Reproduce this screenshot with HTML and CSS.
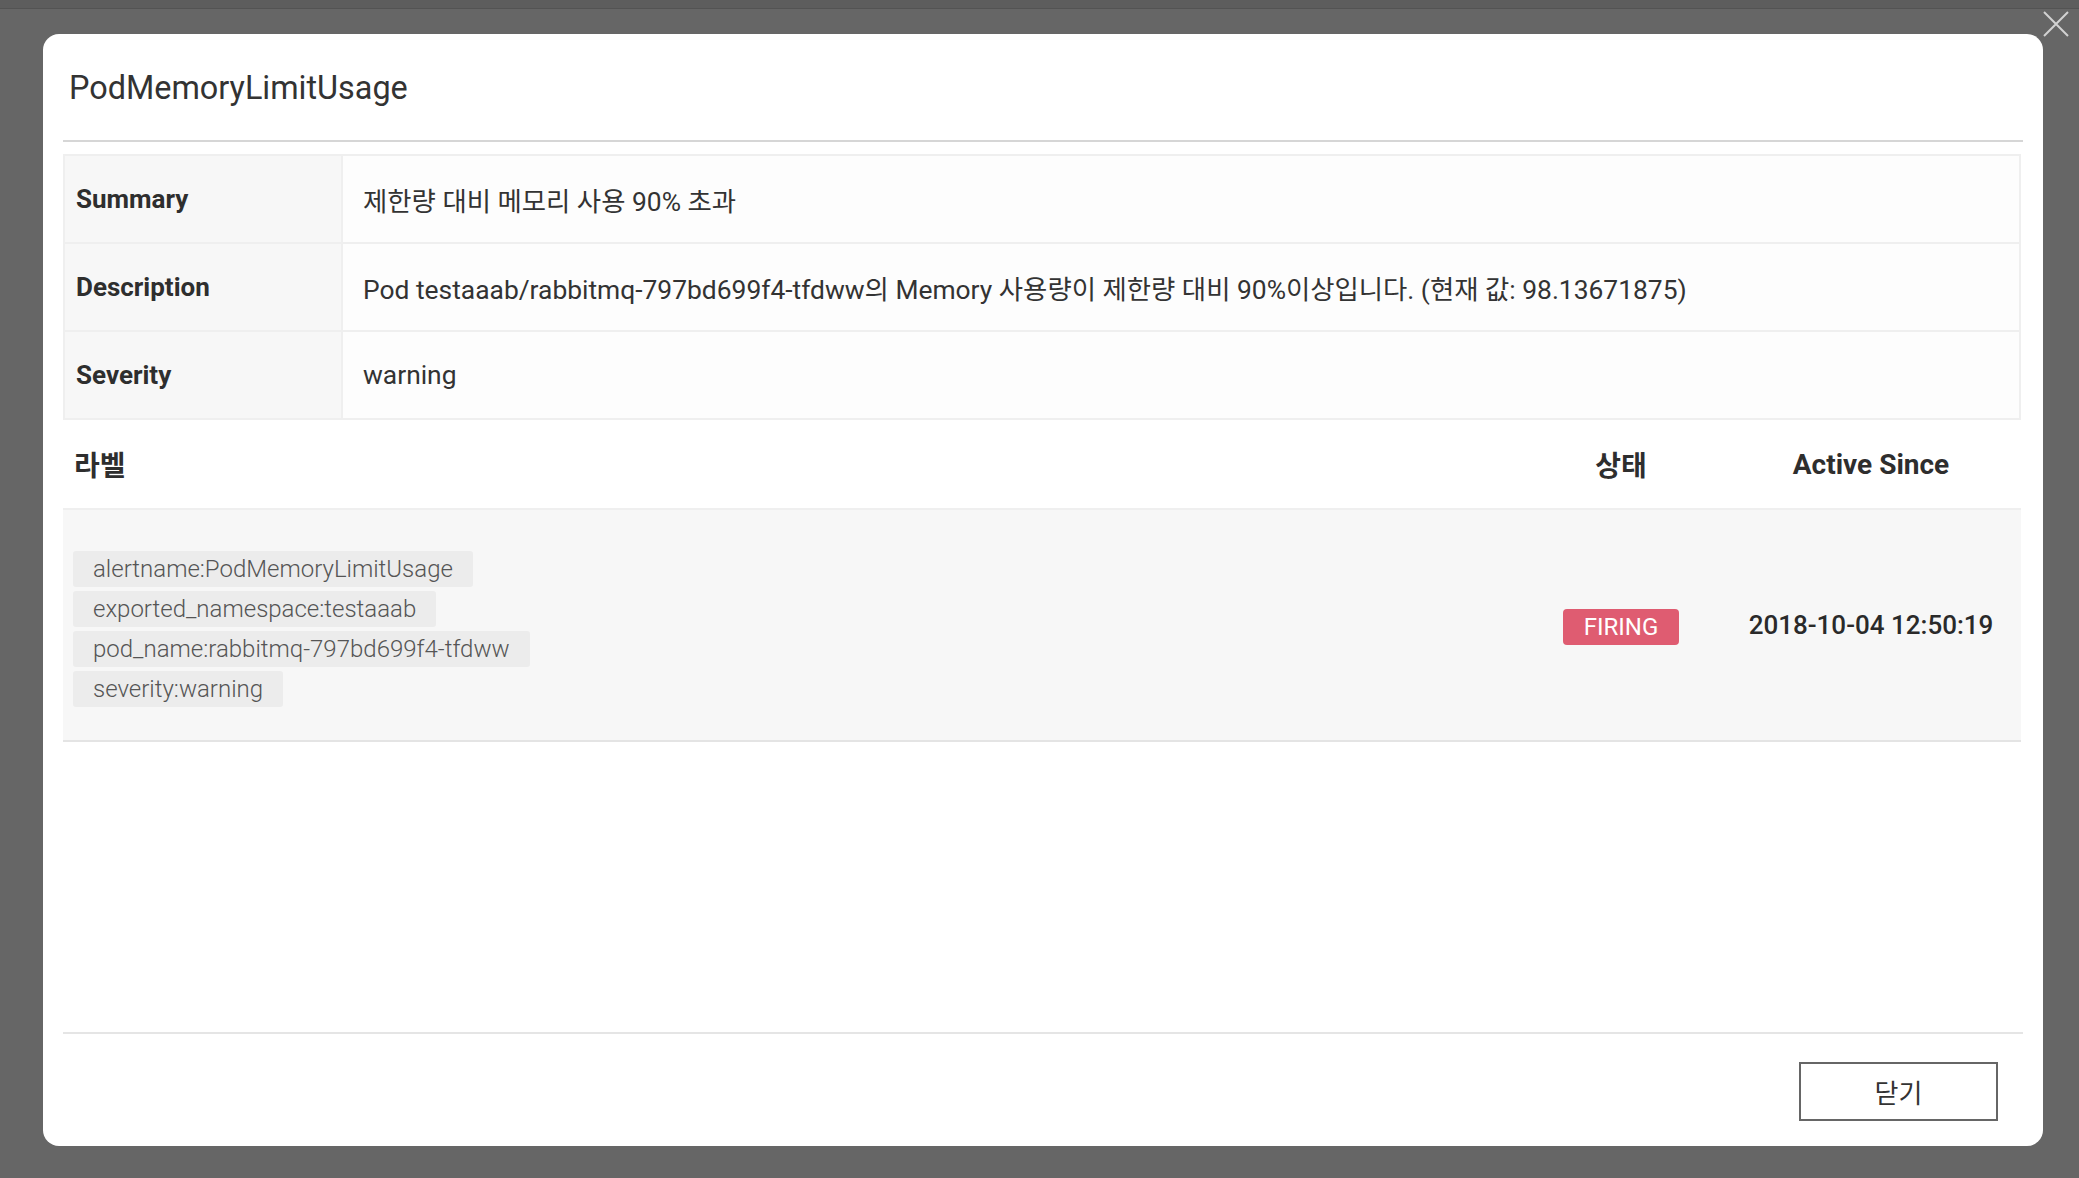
FILE: index.html
```html
<!DOCTYPE html>
<html lang="ko">
<head>
<meta charset="utf-8">
<title>PodMemoryLimitUsage</title>
<link rel="stylesheet" href="styles.css">
</head>
<body>
<div class="topbar"></div>
<button class="close-x" aria-label="close">
  <svg width="26" height="26" viewBox="0 0 26 26"><path d="M1 1 L25 25 M25 1 L1 25" stroke="#d2d2d2" stroke-width="2" fill="none"/></svg>
</button>
<div class="modal">
  <div class="modal-header">
    <h2 class="modal-title">PodMemoryLimitUsage</h2>
  </div>
  <div class="modal-body">
    <div class="info">
      <div class="info-label">Summary</div>
      <div class="info-value">제한량 대비 메모리 사용 90% 초과</div>
      <div class="info-label">Description</div>
      <div class="info-value">Pod testaaab/rabbitmq-797bd699f4-tfdww의 Memory 사용량이 제한량 대비 90%이상입니다. (현재 값: 98.13671875)</div>
      <div class="info-label last">Severity</div>
      <div class="info-value last">warning</div>
    </div>
    <div class="alerts">
      <div class="head head-left">라벨</div>
      <div class="head">상태</div>
      <div class="head">Active Since</div>
      <div class="cell cell-tags">
        <span class="tag">alertname:PodMemoryLimitUsage</span>
        <span class="tag">exported_namespace:testaaab</span>
        <span class="tag">pod_name:rabbitmq-797bd699f4-tfdww</span>
        <span class="tag">severity:warning</span>
      </div>
      <div class="cell cell-center"><span class="badge">FIRING</span></div>
      <div class="cell cell-center date">2018-10-04 12:50:19</div>
    </div>
  </div>
  <div class="modal-footer">
    <button class="btn-close">닫기</button>
  </div>
</div>
</body>
</html>
```
FILE: styles.css
```css
html, body {
  margin: 0;
  padding: 0;
}
body {
  background: #666666;
  font-family: Roboto, "Noto Sans CJK KR", sans-serif;
  color: #333333;
  height: 1178px;
  overflow: hidden;
}
.topbar {
  height: 8px;
  background: #5d5d5d;
  border-bottom: 1px solid #535353;
}
.close-x {
  position: absolute;
  left: 2043px;
  top: 11px;
  width: 26px;
  height: 26px;
  padding: 0;
  margin: 0;
  border: none;
  background: transparent;
}
.close-x svg {
  display: block;
}
.modal {
  margin: 25px 0 0 43px;
  width: 2000px;
  height: 1112px;
  background: #ffffff;
  border-radius: 16px;
  display: flex;
  flex-direction: column;
  padding: 0 20px;
  box-sizing: border-box;
}
.modal-header {
  padding: 34px 6px 32px;
  border-bottom: 2px solid #d6d6d6;
}
.modal-title {
  margin: 0;
  font-size: 32.4px;
  font-weight: 400;
  line-height: 40px;
  color: #333333;
}
.modal-body {
  flex: 1;
  padding: 12px 2px 0 0;
}
.info {
  display: grid;
  grid-template-columns: 278px 1fr;
  border: 2px solid #efefef;
}
.info-label,
.info-value {
  height: 86px;
  display: flex;
  align-items: center;
  font-size: 26px;
  border-bottom: 2px solid #efefef;
  white-space: nowrap;
}
.info-label.last,
.info-value.last {
  border-bottom: none;
}
.info-label {
  background: #f7f7f7;
  border-right: 2px solid #efefef;
  font-weight: 700;
  padding-left: 11px;
  color: #2e2e2e;
}
.info-value {
  padding-left: 20px;
  font-size: 26.4px;
  color: #333333;
  background: #fdfdfd;
}
.alerts {
  display: grid;
  grid-template-columns: 1fr 200px 300px;
}
.head {
  height: 88px;
  border-bottom: 2px solid #efefef;
  display: flex;
  align-items: center;
  justify-content: center;
  font-size: 28px;
  font-weight: 700;
  color: #2e2e2e;
}
.head-left {
  justify-content: flex-start;
  padding-left: 11px;
}
.cell {
  background: #f7f7f7;
  border-bottom: 2px solid #e4e4e4;
}
.cell-tags {
  display: flex;
  flex-direction: column;
  align-items: flex-start;
  gap: 4px;
  padding: 41px 10px 33px;
}
.tag {
  height: 36px;
  line-height: 36px;
  padding: 0 20px;
  background: #ececec;
  border-radius: 3px;
  font-size: 24px;
  font-weight: 300;
  color: #555555;
}
.cell-center {
  display: flex;
  align-items: center;
  justify-content: center;
}
.badge {
  height: 36px;
  line-height: 36px;
  padding: 0 21px;
  margin-top: 3px;
  background: #df5c71;
  color: #ffffff;
  border-radius: 4px;
  font-size: 24px;
}
.date {
  font-size: 26px;
  font-weight: 500;
  color: #2a2a2a;
}
.modal-footer {
  border-top: 2px solid #e5e5e5;
  padding: 28px 25px 25px 0;
  display: flex;
  justify-content: flex-end;
}
.btn-close {
  width: 199px;
  height: 59px;
  border: 2px solid #666666;
  background: #ffffff;
  font-family: "Noto Sans CJK KR", sans-serif;
  font-size: 26px;
  color: #333333;
  padding: 0;
  margin: 0;
  border-radius: 0;
}
```
